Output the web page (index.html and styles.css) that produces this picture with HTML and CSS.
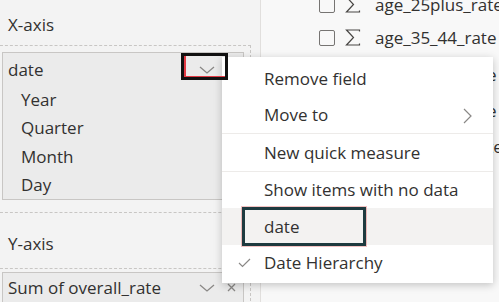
FILE: index.html
```html
<!DOCTYPE html>
<html>
<head>
<meta charset="utf-8">
<link rel="stylesheet" href="styles.css">
</head>
<body>
<div class="app">
  <aside class="wells">
    <div class="well-title first">X-axis</div>
    <div class="well">
      <div class="field">
        <div class="field-head">
          <span class="field-name">date</span>
          <span class="actions">
            <span class="btn"><svg width="16" height="8" viewBox="0 0 16 8"><path d="M1 1 L8 7 L15 1" fill="none" stroke="#8a8886" stroke-width="1.3"/></svg></span>
            <span class="btn"><svg width="9" height="9" viewBox="0 0 9 9"><path d="M1 1 L8 8 M8 1 L1 8" fill="none" stroke="#8a8886" stroke-width="1.3"/></svg></span>
          </span>
        </div>
        <ul class="levels">
          <li>Year</li>
          <li>Quarter</li>
          <li>Month</li>
          <li>Day</li>
        </ul>
      </div>
    </div>
    <div class="well-title second">Y-axis</div>
    <div class="well">
      <div class="field">
        <div class="field-head short">
          <span class="field-name">Sum of overall_rate</span>
          <span class="actions">
            <span class="btn"><svg width="16" height="8" viewBox="0 0 16 8"><path d="M1 1 L8 7 L15 1" fill="none" stroke="#8a8886" stroke-width="1.3"/></svg></span>
            <span class="btn"><svg width="9" height="9" viewBox="0 0 9 9"><path d="M1 1 L8 8 M8 1 L1 8" fill="none" stroke="#8a8886" stroke-width="1.3"/></svg></span>
          </span>
        </div>
      </div>
    </div>
  </aside>
  <section class="fields">
    <ul class="field-list">
      <li><span class="cb"></span><svg class="sigma" width="16" height="17" viewBox="0 0 16 17"><path d="M14.5 2.5 V1 H1.5 L8.5 8.5 L1.5 16 H14.5 V14.5" fill="none" stroke="#484644" stroke-width="1.2"/></svg><span>age_25plus_rate</span></li>
      <li><span class="cb"></span><svg class="sigma" width="16" height="17" viewBox="0 0 16 17"><path d="M14.5 2.5 V1 H1.5 L8.5 8.5 L1.5 16 H14.5 V14.5" fill="none" stroke="#484644" stroke-width="1.2"/></svg><span>age_35_44_rate</span></li>
      <li class="more"><span class="cb"></span><svg class="sigma" width="16" height="17" viewBox="0 0 16 17"><path d="M14.5 2.5 V1 H1.5 L8.5 8.5 L1.5 16 H14.5 V14.5" fill="none" stroke="#484644" stroke-width="1.2"/></svg><span>age_45_54_rate</span></li>
      <li class="more"><span class="cb"></span><svg class="sigma" width="16" height="17" viewBox="0 0 16 17"><path d="M14.5 2.5 V1 H1.5 L8.5 8.5 L1.5 16 H14.5 V14.5" fill="none" stroke="#484644" stroke-width="1.2"/></svg><span>age_55_64_rate</span></li>
      <li class="more"><span class="cb"></span><svg class="sigma" width="16" height="17" viewBox="0 0 16 17"><path d="M14.5 2.5 V1 H1.5 L8.5 8.5 L1.5 16 H14.5 V14.5" fill="none" stroke="#484644" stroke-width="1.2"/></svg><span>age_65plus_rate</span></li>
    </ul>
  </section>

  <div class="menu">
    <div class="item r1">Remove field</div>
    <div class="item r2">Move to
      <svg class="sub" width="9" height="16" viewBox="0 0 9 16"><path d="M1 1 L8 8 L1 15" fill="none" stroke="#8a8886" stroke-width="1.2"/></svg>
    </div>
    <div class="sep"></div>
    <div class="item r3">New quick measure</div>
    <div class="sep"></div>
    <div class="item r4">Show items with no data</div>
    <div class="item r5 hover">date</div>
    <div class="item r6"><svg class="check" width="13" height="10" viewBox="0 0 13 10"><path d="M1 5 L4.5 8.5 L12 1" fill="none" stroke="#8a8886" stroke-width="1.2"/></svg>Date Hierarchy</div>
  </div>

  <div class="annot annot-chev"></div>
  <div class="annot annot-date"></div>
</div>
</body>
</html>
```

FILE: styles.css
```css
* { box-sizing: border-box; }
html, body { margin: 0; padding: 0; }
body {
  width: 499px;
  height: 302px;
  overflow: hidden;
  font-family: "Open Sans", "Noto Sans", sans-serif;
  font-size: 17px;
  color: #323130;
  background: #f3f3f3;
}
.app {
  position: relative;
  display: flex;
  width: 499px;
  height: 302px;
  overflow: hidden;
}
.wells {
  width: 260px;
  flex: none;
  background: #f3f3f3;
}
.well-title {
  height: 20px;
  line-height: 20px;
  padding-left: 8px;
  box-sizing: content-box;
}
.well-title.first { padding-top: 15px; padding-bottom: 10px; }
.well-title.second { padding-top: 21px; padding-bottom: 14px; }
.well {
  margin: 0 9px 0 -5px;
  border: 1px dashed #c8c6c4;
  padding: 6px 6px 12px 6px;
}
.well:last-child { padding-top: 3px; }
.field {
  border: 1px solid #c8c6c4;
  background: #ebebeb;
}
.field-head {
  height: 33px;
  display: flex;
  align-items: center;
  justify-content: space-between;
  padding-left: 5px;
}
.field-name { white-space: nowrap; }
.field-head.short { height: 29px; }
.actions { display: flex; flex: none; }
.btn {
  width: 24px;
  height: 20px;
  display: flex;
  align-items: center;
  justify-content: center;
}
.levels {
  list-style: none;
  margin: 0;
  padding: 0 0 0 18px;
}
.levels li {
  height: 28.25px;
  line-height: 28.25px;
}
.fields {
  flex: 1;
  border-left: 1px solid #e1dfdd;
  background: #f8f8f8;
}
.field-list {
  list-style: none;
  margin: -12px 0 0 0;
  padding: 0 0 0 58px;
}
.field-list li {
  height: 33px;
  display: flex;
  align-items: center;
  white-space: nowrap;
}
.field-list li.more { height: 36px; }
.field-list li.more:nth-child(3) { margin-top: 2px; }
.cb {
  width: 16px;
  height: 16px;
  border: 1px solid #767472;
  border-radius: 2px;
  flex: none;
  margin-right: 10px;
}
.sigma {
  flex: none;
  margin-right: 14px;
}
.menu {
  position: absolute;
  left: 222px;
  top: 57px;
  width: 271px;
  height: 226px;
  background: #fff;
  padding-top: 3px;
  box-shadow: 0 2px 8px rgba(0, 0, 0, 0.22);
  z-index: 2;
}
.item {
  height: 36.5px;
  display: flex;
  align-items: center;
  padding-left: 42px;
  position: relative;
  white-space: nowrap;
}
.item.hover { background: #f3f2f1; }
.sep { height: 1px; background: #edebe9; }
.sub { position: absolute; right: 21px; top: 11px; }
.check { position: absolute; left: 16px; top: 13px; }
.annot {
  position: absolute;
  z-index: 3;
}
.annot-chev {
  left: 181px;
  top: 53px;
  width: 47px;
  height: 27px;
  border: 3px solid #111;
  box-shadow: inset 2px 0 0 #e23a44, inset 0 -1px 0 #e23a44;
}
.annot-date {
  left: 242px;
  top: 207px;
  width: 124px;
  height: 39px;
  border: 3px solid #1e3a3f;
  box-shadow: 0 0 0 1px rgba(220, 80, 80, 0.35);
}
```
